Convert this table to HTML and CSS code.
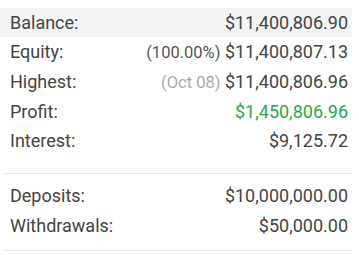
FILE: index.html
```html
<!DOCTYPE html>
<html>
<head>
<meta charset="utf-8">
<link rel="stylesheet" href="styles.css">
</head>
<body>
<div class="panel">
  <div class="section first">
    <div class="row highlight"><span class="label">Balance:</span><span class="value">$11,400,806.90</span></div>
    <div class="row"><span class="label">Equity:</span><span class="value"><span class="note">(100.00%)</span> $11,400,807.13</span></div>
    <div class="row"><span class="label">Highest:</span><span class="value"><span class="note light">(Oct 08)</span> $11,400,806.96</span></div>
    <div class="row"><span class="label">Profit:</span><span class="value positive">$1,450,806.96</span></div>
    <div class="row"><span class="label">Interest:</span><span class="value">$9,125.72</span></div>
  </div>
  <div class="divider"></div>
  <div class="section second">
    <div class="row"><span class="label">Deposits:</span><span class="value">$10,000,000.00</span></div>
    <div class="row"><span class="label">Withdrawals:</span><span class="value">$50,000.00</span></div>
  </div>
  <div class="divider"></div>
</div>
</body>
</html>
```
FILE: styles.css
```css
html, body {
  margin: 0;
  padding: 0;
  background: #ffffff;
}
body {
  font-family: Roboto, "Liberation Sans", sans-serif;
  font-size: 18px;
  color: #444444;
}
.panel {
  width: 352px;
}
.section.first {
  padding-top: 7.5px;
  padding-bottom: 17.5px;
}
.section.second {
  padding-top: 7px;
  padding-bottom: 9.8px;
}
.row {
  display: flex;
  justify-content: space-between;
  align-items: center;
  height: 29.6px;
  padding: 0 4px 0 10px;
}
.row.highlight {
  background: #f3f4f6;
}
.note {
  font-size: 16.5px;
  color: #555555;
}
.note.light {
  color: #aaaaaa;
}
.positive {
  color: #2ca84a;
}
.divider {
  height: 1px;
  margin-left: 4px;
  background: #e9e9e9;
}
```
